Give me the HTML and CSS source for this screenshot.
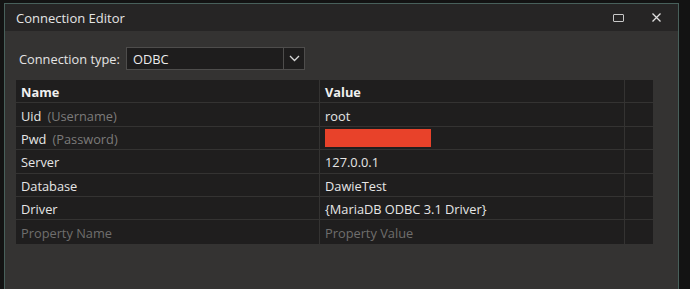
FILE: index.html
```html
<!DOCTYPE html>
<html lang="en">
<head>
  <meta charset="UTF-8">
  <title>Connection Editor</title>
  <link rel="stylesheet" href="styles.css">
</head>
<body>
  <div class="window">
    <div class="titlebar">
      <span class="title">Connection Editor</span>
      <div class="controls">
        <span class="btn-max"></span>
        <span class="btn-close">
          <svg width="9" height="9" viewBox="0 0 9 9"><path d="M0.5 0.5L8.5 8.5M8.5 0.5L0.5 8.5" stroke="#e0e0e0" stroke-width="1.3"/></svg>
        </span>
      </div>
    </div>
    <div class="body">
      <div class="type-row">
        <label>Connection type:</label>
        <div class="combo">
          <span class="combo-value">ODBC</span>
          <span class="combo-arrow">
            <svg width="11" height="7" viewBox="0 0 11 7"><path d="M1 1L5.5 5.5L10 1" fill="none" stroke="#d8d8d8" stroke-width="1.3"/></svg>
          </span>
        </div>
      </div>
      <div class="grid">
        <div class="cell head">Name</div>
        <div class="cell head">Value</div>
        <div class="cell"></div>

        <div class="cell">Uid <span class="hint">(Username)</span></div>
        <div class="cell">root</div>
        <div class="cell"></div>

        <div class="cell">Pwd <span class="hint">(Password)</span></div>
        <div class="cell"><span class="redact"></span></div>
        <div class="cell"></div>

        <div class="cell">Server</div>
        <div class="cell">127.0.0.1</div>
        <div class="cell"></div>

        <div class="cell">Database</div>
        <div class="cell">DawieTest</div>
        <div class="cell"></div>

        <div class="cell">Driver</div>
        <div class="cell">{MariaDB ODBC 3.1 Driver}</div>
        <div class="cell"></div>

        <div class="cell placeholder">Property Name</div>
        <div class="cell placeholder">Property Value</div>
        <div class="cell"></div>
      </div>
    </div>
  </div>
</body>
</html>
```

FILE: styles.css
```css
body {
  margin: 0;
  background: #131313;
  font-family: 'Open Sans', 'Noto Sans', sans-serif;
  font-size: 12.8px;
  color: #e6e6e6;
  height: 289px;
  overflow: hidden;
}

.window {
  margin: 3px 0 0 4px;
  width: 673px;
  height: 290px;
  border: 1px solid #48605b;
  border-bottom: none;
  background: #343332;
  display: flex;
  flex-direction: column;
}

.titlebar {
  height: 27px;
  background: #262525;
  display: flex;
  align-items: center;
  justify-content: space-between;
  padding-left: 11px;
}

.title {
  color: #e4e4e4;
  font-size: 13px;
  padding-top: 1px;
}

.controls {
  display: flex;
  align-items: center;
}

.btn-max {
  width: 9px;
  height: 6px;
  border: 1.5px solid #c8c8c8;
  border-radius: 1px;
  margin-right: 28px;
}

.btn-close {
  display: flex;
  margin-right: 17px;
}

.body {
  padding: 16px 24px 0 11px;
}

.type-row {
  display: flex;
  align-items: center;
  padding-left: 3px;
}

.type-row label {
  width: 107px;
  color: #e4e4e4;
  padding-top: 1px;
}

.combo {
  width: 177px;
  height: 21px;
  border: 1px solid #4e4d4c;
  background: #1e1d1d;
  display: flex;
  align-items: center;
}

.combo-value {
  flex: 1;
  padding-left: 6px;
  padding-top: 1px;
  color: #ececec;
}

.combo-arrow {
  width: 20px;
  height: 21px;
  border-left: 1px solid #4e4d4c;
  display: flex;
  align-items: center;
  justify-content: center;
}

.grid {
  margin-top: 10px;
  width: 637px;
  display: grid;
  grid-template-columns: 304px 305px 28px;
  grid-auto-rows: 23.4px;
  background: #1f1e1e;
}

.cell {
  display: flex;
  align-items: center;
  padding: 2px 0 0 5px;
  border-right: 1px solid #343332;
  border-bottom: 1px solid #343332;
  white-space: nowrap;
  overflow: hidden;
}

.cell:nth-child(3n) {
  border-right: none;
}

.head {
  font-weight: bold;
  color: #f0f0f0;
}

.hint {
  color: #7c7b7a;
  margin-left: 6px;
}

.placeholder {
  color: #6f6e6d;
  border-bottom: none;
}

.grid .cell:nth-last-child(1) {
  border-bottom: none;
}

.redact {
  width: 106px;
  height: 18px;
  margin-top: -2px;
  background: #e8422a;
}
```
